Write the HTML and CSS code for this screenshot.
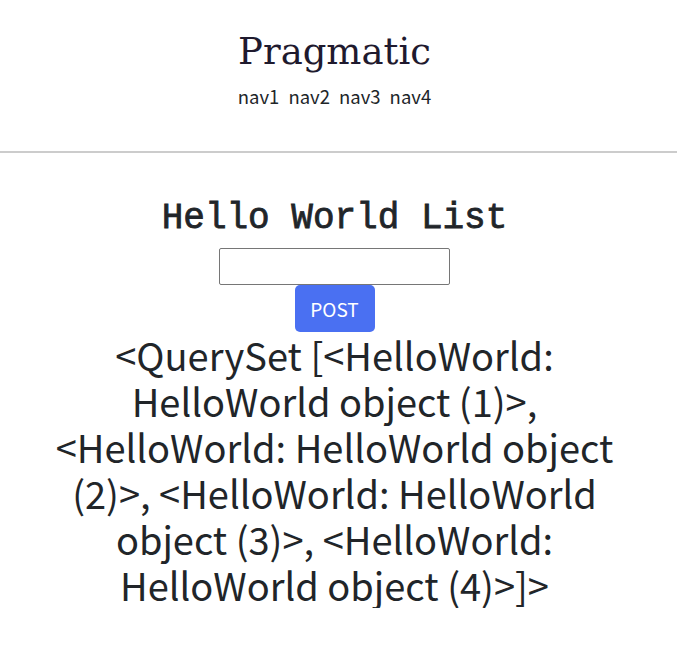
FILE: index.html
```html
<!DOCTYPE html>
<html>
<head>
<meta charset="utf-8">
<link rel="stylesheet" href="styles.css">
</head>
<body>
<header class="site-header">
  <h1 class="logo">Pragmatic</h1>
  <nav class="nav">
    <span>nav1</span>
    <span>nav2</span>
    <span>nav3</span>
    <span>nav4</span>
  </nav>
</header>
<hr class="divider">
<main class="content">
  <h2 class="list-title">Hello World List</h2>
  <form class="post-form">
    <input class="text-input" type="text">
    <button class="post-btn" type="button">POST</button>
  </form>
  <h1 class="queryset">&lt;QuerySet [&lt;HelloWorld: HelloWorld object (1)&gt;, &lt;HelloWorld: HelloWorld object (2)&gt;, &lt;HelloWorld: HelloWorld object (3)&gt;, &lt;HelloWorld: HelloWorld object (4)&gt;]&gt;</h1>
</main>
</body>
</html>
```

FILE: styles.css
```css
* { box-sizing: border-box; }
body {
  margin: 0;
  font-family: "Noto Sans CJK KR", "Noto Sans", sans-serif;
  font-size: 16px;
  line-height: 1.5;
  color: #212529;
  background: #fff;
}
.site-header {
  text-align: center;
  padding: 29px 8px 41px 0;
}
.logo {
  margin: 0;
  font-family: "DejaVu Serif", serif;
  font-weight: normal;
  font-size: 37px;
  line-height: 46px;
  color: #1f1a2e;
}
.nav {
  display: flex;
  justify-content: center;
  gap: 9px;
  font-size: 18.5px;
  line-height: 27px;
  margin-top: 8px;
}
.divider {
  margin: 0;
  border: 0;
  border-top: 2px solid #ccc;
}
.content {
  text-align: center;
  padding: 44px 8px 0 0;
}
.list-title {
  margin: 0 0 8px;
  font-family: "Liberation Mono", monospace;
  font-weight: normal;
  -webkit-text-stroke: 0.8px #212529;
  font-size: 36px;
  line-height: 1.2;
}
.post-form {
  display: flex;
  flex-direction: column;
  align-items: center;
}
.text-input {
  width: 231px;
  height: 37px;
  border: 1px solid #767676;
  border-radius: 2px;
  margin: 0;
}
.post-btn {
  width: 80px;
  height: 47px;
  border: 0;
  border-radius: 5px;
  background: #4a70f2;
  color: #fff;
  font-family: inherit;
  font-size: 19px;
}
.queryset {
  margin: 0 auto;
  max-width: 600px;
  font-weight: normal;
  font-size: 38px;
  line-height: 46px;
}
```
